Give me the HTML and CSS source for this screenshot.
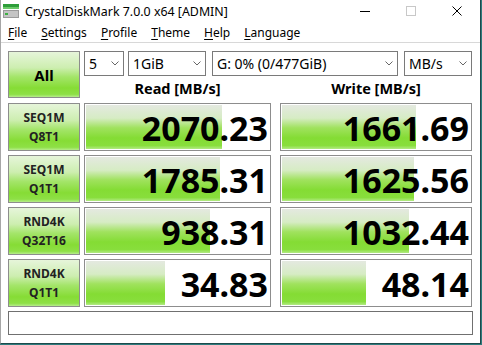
FILE: index.html
```html
<!DOCTYPE html>
<html lang="en">
<head>
    <meta charset="UTF-8">
    <title>CrystalDiskMark 7.0.0 x64 [ADMIN]</title>
    <link rel="stylesheet" href="styles.css">
</head>
<body>
    <div class="window">
        <div class="titlebar">
            <svg class="app-icon" width="16" height="14" viewBox="0 0 16 14">
                <rect x="0" y="0" width="16" height="3" fill="#2e9e3a"/>
                <rect x="0" y="3" width="16" height="2" fill="#6cc96a"/>
                <rect x="0" y="6" width="16" height="8" fill="#9a9a9a"/>
                <rect x="1" y="7" width="14" height="6" fill="#c4c4c4"/>
                <rect x="2" y="9" width="3" height="2" fill="#3cb043"/>
            </svg>
            <span class="title">CrystalDiskMark 7.0.0 x64 [ADMIN]</span>
            <div class="caption-buttons">
                <span class="cap-btn">
                    <svg width="12" height="12" viewBox="0 0 12 12"><path d="M1 6.5h10" stroke="#000" stroke-width="1"/></svg>
                </span>
                <span class="cap-btn">
                    <svg width="12" height="12" viewBox="0 0 12 12"><rect x="1.5" y="1.5" width="9" height="9" fill="none" stroke="#c8c8c8"/></svg>
                </span>
                <span class="cap-btn">
                    <svg width="12" height="12" viewBox="0 0 12 12"><path d="M1.5 1.5l9 9M10.5 1.5l-9 9" stroke="#000" stroke-width="1"/></svg>
                </span>
            </div>
        </div>

        <nav class="menubar">
            <span><u>F</u>ile</span>
            <span><u>S</u>ettings</span>
            <span><u>P</u>rofile</span>
            <span><u>T</u>heme</span>
            <span><u>H</u>elp</span>
            <span><u>L</u>anguage</span>
        </nav>

        <div class="main">
            <div class="top">
                <div class="btn all">All</div>
                <div class="top-right">
                    <div class="controls">
                        <div class="select sel-count"><span>5</span><svg width="8" height="5" viewBox="0 0 8 5"><path d="M0.5 0.5l3.5 3.5 3.5-3.5" fill="none" stroke="#666"/></svg></div>
                        <div class="select sel-size"><span>1GiB</span><svg width="8" height="5" viewBox="0 0 8 5"><path d="M0.5 0.5l3.5 3.5 3.5-3.5" fill="none" stroke="#666"/></svg></div>
                        <div class="select sel-drive"><span>G: 0% (0/477GiB)</span><svg width="8" height="5" viewBox="0 0 8 5"><path d="M0.5 0.5l3.5 3.5 3.5-3.5" fill="none" stroke="#666"/></svg></div>
                        <div class="select sel-unit"><span>MB/s</span><svg width="8" height="5" viewBox="0 0 8 5"><path d="M0.5 0.5l3.5 3.5 3.5-3.5" fill="none" stroke="#666"/></svg></div>
                    </div>
                    <div class="headers">
                        <div class="col-head read">Read [MB/s]</div>
                        <div class="col-head write">Write [MB/s]</div>
                    </div>
                </div>
            </div>

            <div class="row">
                <div class="btn label">SEQ1M<br>Q8T1</div>
                <div class="cell read"><div class="bar" style="width: 73.7%"></div><span class="value">2070.23</span></div>
                <div class="cell write"><div class="bar" style="width: 70.5%"></div><span class="value">1661.69</span></div>
            </div>
            <div class="row">
                <div class="btn label">SEQ1M<br>Q1T1</div>
                <div class="cell read"><div class="bar" style="width: 72.6%"></div><span class="value">1785.31</span></div>
                <div class="cell write"><div class="bar" style="width: 69.5%"></div><span class="value">1625.56</span></div>
            </div>
            <div class="row">
                <div class="btn label">RND4K<br>Q32T16</div>
                <div class="cell read"><div class="bar" style="width: 67.2%"></div><span class="value">938.31</span></div>
                <div class="cell write"><div class="bar" style="width: 66.8%"></div><span class="value">1032.44</span></div>
            </div>
            <div class="row">
                <div class="btn label">RND4K<br>Q1T1</div>
                <div class="cell read"><div class="bar" style="width: 42.5%"></div><span class="value">34.83</span></div>
                <div class="cell write"><div class="bar" style="width: 44.2%"></div><span class="value">48.14</span></div>
            </div>

            <div class="status"></div>
        </div>
    </div>
</body>
</html>
```

FILE: styles.css
```css
* {
    margin: 0;
    padding: 0;
    box-sizing: border-box;
}

body {
    font-family: 'Noto Sans', 'Segoe UI', sans-serif;
    background-color: #2f7b7c;
    color: #000;
}

.window {
    width: 481px;
    height: 344px;
    background-color: #fff;
    border-left: 1px solid #a6a6a6;
    border-right: 1px solid #1c4a4c;
    border-bottom: 1px solid #1c4a4c;
    display: flex;
    flex-direction: column;
}

/* title bar */

.titlebar {
    height: 22px;
    display: flex;
    align-items: center;
    padding-left: 2px;
}

.app-icon {
    margin-right: 6px;
}

.title {
    font-size: 12.4px;
    flex: 1;
}

.caption-buttons {
    display: flex;
    align-self: flex-start;
    padding-top: 5px;
}

.cap-btn {
    width: 46px;
    display: flex;
    justify-content: center;
}

/* menu */

.menubar {
    height: 21px;
    display: flex;
    align-items: center;
    gap: 14px;
    padding-left: 7px;
    font-size: 12px;
    border-bottom: 1px solid #d8d8d8;
}

.menubar u {
    text-decoration-thickness: 1px;
    text-underline-offset: 2px;
}

/* benchmark area */

.main {
    padding: 8px 8px 0 7px;
    display: flex;
    flex-direction: column;
    gap: 4px;
}

.top {
    display: flex;
    gap: 4px;
    height: 48px;
}

.btn {
    border: 1px solid #8d8d8d;
    background: linear-gradient(#e6f5da 0%, #cdeeb0 35%, #a4e56a 55%, #86dc35 80%, #8ee046 94%, #b6ec8c 100%);
    display: flex;
    align-items: center;
    justify-content: center;
    text-align: center;
    font-weight: bold;
}

.all {
    width: 72px;
    height: 47px;
    font-size: 15px;
}

.top-right {
    flex: 1;
    display: flex;
    flex-direction: column;
}

.controls {
    display: flex;
    height: 25px;
}

.select {
    border: 1px solid #7a7a7a;
    display: flex;
    align-items: center;
    justify-content: space-between;
    padding: 0 4px 0 4px;
    font-size: 14px;
}

.select svg {
    flex-shrink: 0;
}

.sel-count {
    width: 40px;
}

.sel-size {
    width: 78px;
    margin-left: 4px;
}

.sel-drive {
    width: 186px;
    margin-left: 6px;
}

.sel-unit {
    width: 68px;
    margin-left: 6px;
}

.headers {
    display: flex;
    flex: 1;
    align-items: center;
    font-size: 14.5px;
    font-weight: bold;
}

.col-head {
    text-align: center;
}

.col-head.read,
.cell.read {
    width: 187px;
}

.col-head.write,
.cell.write {
    width: 192px;
    margin-left: 9px;
}

.row {
    display: flex;
    gap: 4px;
    height: 48px;
}

.row .cell.write {
    margin-left: 5px;
}

.label {
    width: 72px;
    font-size: 12px;
    line-height: 19px;
    color: #222;
}

.cell {
    position: relative;
    border: 1px solid #8d8d8d;
    padding: 1px;
    display: flex;
    align-items: center;
    justify-content: flex-end;
}

.bar {
    position: absolute;
    left: 1px;
    top: 1px;
    bottom: 1px;
    background: linear-gradient(#e4e9e0 0%, #d6ecc4 30%, #a0e25e 52%, #84dc34 75%, #88de3c 92%, #b2ea84 100%);
}

.value {
    position: relative;
    font-size: 34px;
    font-weight: bold;
    line-height: 1;
    padding-right: 1px;
    padding-top: 2px;
}

.status {
    height: 24px;
    width: 465px;
    border: 1px solid #707070;
}
```
